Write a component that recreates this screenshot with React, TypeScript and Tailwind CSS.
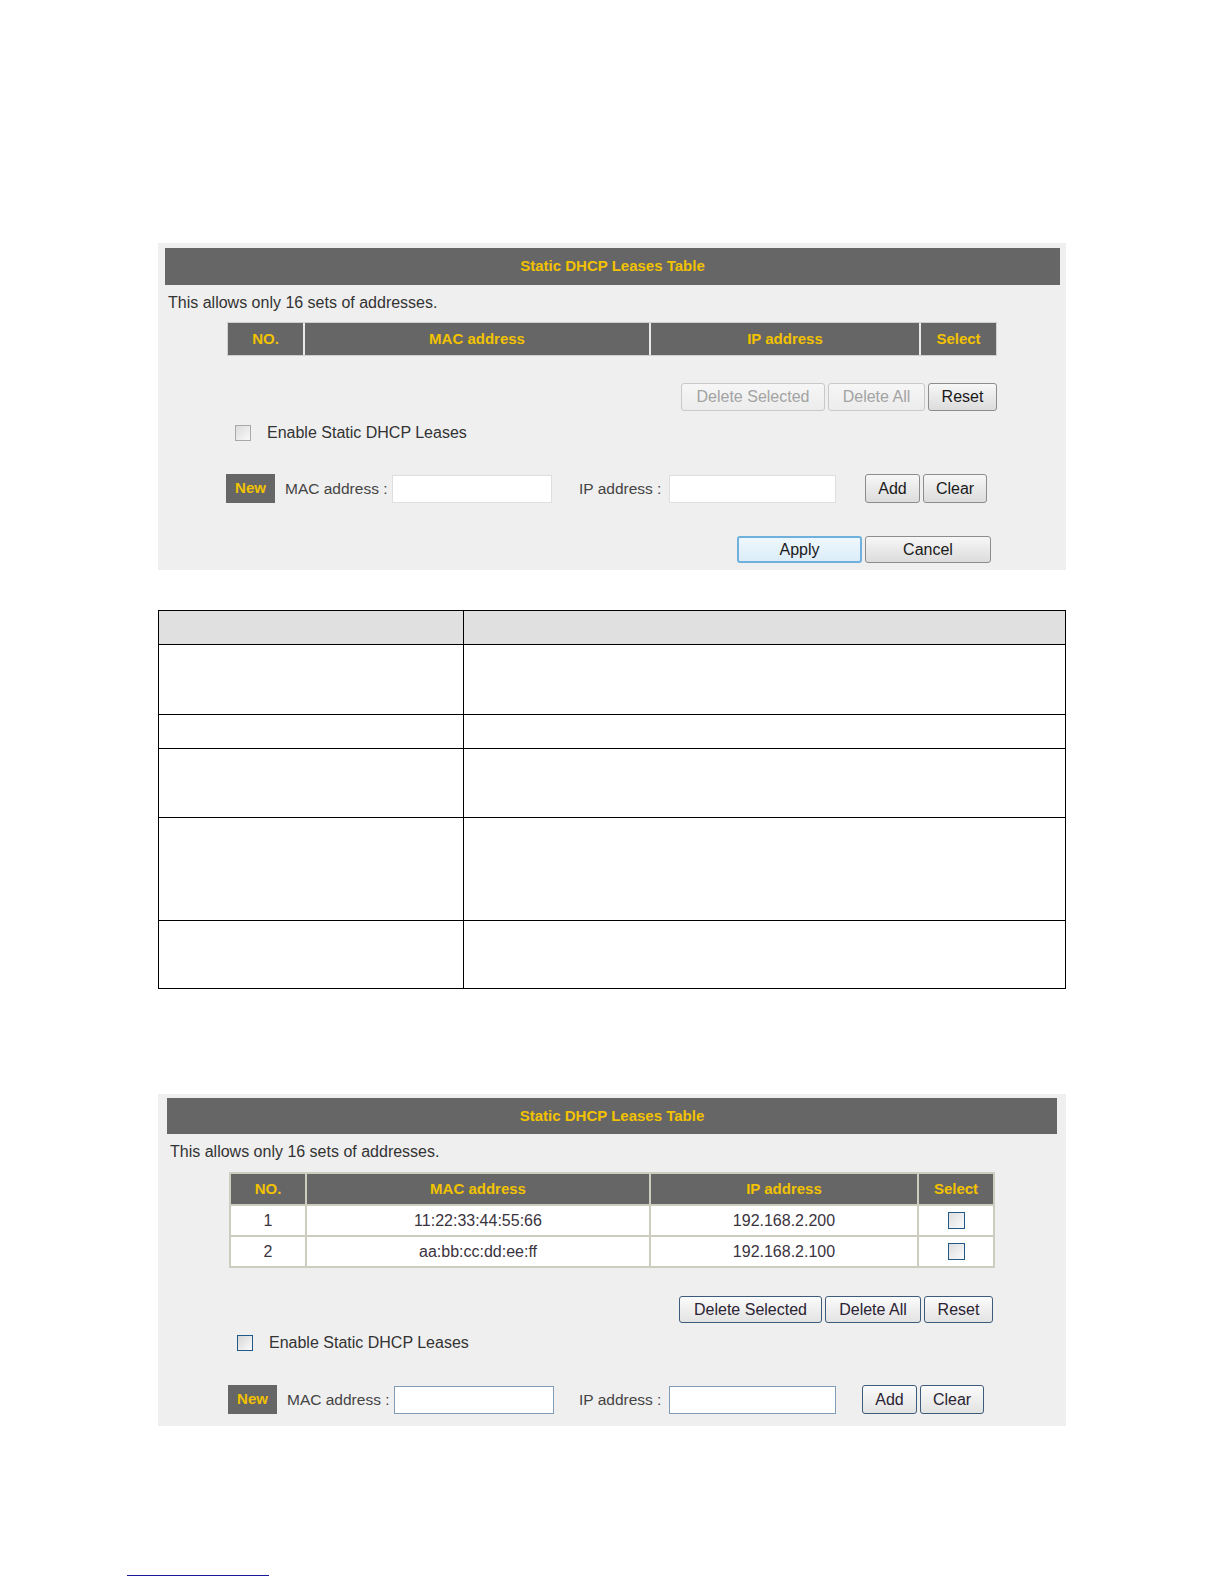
import React from 'react'

const font = { fontFamily: '"Liberation Sans", Arial, sans-serif' }

function Btn({
  children,
  w,
  kind = 'classic',
}: {
  children: React.ReactNode
  w: string
  kind?: 'classic' | 'disabled' | 'focus' | 'blue'
}) {
  const look = {
    classic: 'border border-[#8c8c8c] bg-linear-to-b from-[#f7f7f7] to-[#dcdcdc] text-[#1a1a1a]',
    disabled: 'border border-[#c9c9c9] bg-linear-to-b from-[#f6f6f6] to-[#ececec] text-[#a3a3a3]',
    focus: 'border-2 border-[#6fb0dc] bg-linear-to-b from-[#eef7fd] to-[#dcedf8] text-[#1a1a1a]',
    blue: 'border border-[#3d5c7c] bg-linear-to-b from-[#fbfbfb] to-[#e3e3e3] text-[#2a2333]',
  }[kind]
  return (
    <div className={`${w} h-full flex items-center justify-center rounded-[3px] text-[16px] leading-none ${look}`}>
      {children}
    </div>
  )
}

function Header({ className }: { className: string }) {
  return (
    <div className={`${className} bg-[#666666] flex items-center justify-center`}>
      <span className="text-[15px] font-bold text-[#f2c200]">Static DHCP Leases Table</span>
    </div>
  )
}

const headCells = ['NO.', 'MAC address', 'IP address', 'Select']

function NewRow({ blue, top }: { blue?: boolean; top: string }) {
  const input = blue ? 'border border-[#7f9db9] bg-white' : 'border border-[#dedede] bg-white'
  return (
    <div className={`${top} flex items-center h-[29px]`}>
      <div className="w-[49px] h-full bg-[#666666] flex items-center justify-center">
        <span className="text-[15px] font-bold text-[#f2c200]">New</span>
      </div>
      <span className="ml-[10px] w-[107px] text-[15.5px] text-[#444]">MAC address :</span>
      <div className={`w-[160px] h-[28px] ${input}`} />
      <span className={`${blue ? 'ml-[25px]' : 'ml-[27px]'} w-[90px] text-[15.5px] text-[#444]`}>IP address :</span>
      <div className={`w-[167px] h-[28px] ${input}`} />
      <div className={`${blue ? 'ml-[26px]' : 'ml-[29px]'} flex gap-[3px] h-[29px]`}>
        <Btn w="w-[55px]" kind={blue ? 'blue' : 'classic'}>Add</Btn>
        <Btn w="w-[64px]" kind={blue ? 'blue' : 'classic'}>Clear</Btn>
      </div>
    </div>
  )
}

function PanelOne() {
  return (
    <div className="ml-[158px] w-[908px] bg-[#efefef] pt-[5px] pb-[7px]">
      <Header className="ml-[7px] mr-[6px] h-[37px]" />
      <p className="mt-[9px] pl-[10px] text-[16px] leading-[18px] text-[#333]">This allows only 16 sets of addresses.</p>
      <div className="mt-[10px] ml-[69px] w-[770px] border border-[#cfcfcf] bg-[#e9e9e9] grid grid-cols-[75px_344px_268px_75px] gap-[2px]">
        {headCells.map((c) => (
          <div key={c} className="h-[32px] bg-[#666666] flex items-center justify-center text-[15px] font-bold text-[#f2c200]">
            {c}
          </div>
        ))}
      </div>
      <div className="mt-[27px] pr-[69px] flex justify-end gap-[3px] h-[28px]">
        <Btn w="w-[144px]" kind="disabled">Delete Selected</Btn>
        <Btn w="w-[97px]" kind="disabled">Delete All</Btn>
        <Btn w="w-[69px]">Reset</Btn>
      </div>
      <div className="mt-[13px] ml-[77px] flex items-center h-[18px]">
        <div className="w-[16px] h-[16px] border border-[#a8a8a8] bg-linear-to-br from-[#dcdcdc] to-[#f8f8f8]" />
        <span className="ml-[16px] text-[16px] text-[#333]">Enable Static DHCP Leases</span>
      </div>
      <div className="ml-[68px]">
        <NewRow top="mt-[32px]" />
      </div>
      <div className="mt-[33px] pr-[75px] flex justify-end gap-[3px] h-[27px]">
        <Btn w="w-[125px]" kind="focus">Apply</Btn>
        <Btn w="w-[126px]">Cancel</Btn>
      </div>
    </div>
  )
}

const rows = [
  ['1', '11:22:33:44:55:66', '192.168.2.200'],
  ['2', 'aa:bb:cc:dd:ee:ff', '192.168.2.100'],
]

function PanelTwo() {
  return (
    <div className="ml-[158px] w-[908px] bg-[#efefef] pt-[4px] pb-[12px]">
      <Header className="ml-[9px] mr-[9px] h-[36px]" />
      <p className="mt-[9px] pl-[12px] text-[16px] leading-[18px] text-[#333]">This allows only 16 sets of addresses.</p>
      <div className="mt-[11px] ml-[71px] w-[766px] bg-[#cdcdbf] p-[2px] grid grid-cols-[74px_342px_266px_74px] grid-rows-[30px_29px_29px] gap-[2px]">
        {headCells.map((c) => (
          <div key={c} className="bg-[#666666] flex items-center justify-center text-[15px] font-bold text-[#f2c200]">
            {c}
          </div>
        ))}
        {rows.map((r) => (
          <React.Fragment key={r[0]}>
            {r.map((v, i) => (
              <div key={i} className="bg-white flex items-center justify-center text-[16px] text-[#3a3340]">
                {v}
              </div>
            ))}
            <div className="bg-white flex items-center justify-center">
              <div className="w-[17px] h-[17px] border border-[#1f5a8a] bg-linear-to-br from-[#dedede] to-[#fbfbfb]" />
            </div>
          </React.Fragment>
        ))}
      </div>
      <div className="mt-[28px] pr-[73px] flex justify-end gap-[3px] h-[27px]">
        <Btn w="w-[143px]" kind="blue">Delete Selected</Btn>
        <Btn w="w-[96px]" kind="blue">Delete All</Btn>
        <Btn w="w-[69px]" kind="blue">Reset</Btn>
      </div>
      <div className="mt-[11px] ml-[79px] flex items-center h-[17px]">
        <div className="w-[16px] h-[16px] border border-[#1f5a8a] bg-linear-to-br from-[#d6d6d6] to-[#fbfbfb]" />
        <span className="ml-[16px] text-[16px] text-[#333]">Enable Static DHCP Leases</span>
      </div>
      <div className="ml-[70px]">
        <NewRow blue top="mt-[34px]" />
      </div>
    </div>
  )
}

const descRows = ['h-[34px] bg-[#e0e0e0]', 'h-[70px]', 'h-[34px]', 'h-[69px]', 'h-[103px]', 'h-[68px]']

function DescTable() {
  return (
    <table className="ml-[158px] mt-[40px] w-[908px] border-collapse">
      <tbody>
        {descRows.map((cls, i) => (
          <tr key={i} className={cls}>
            <td className="w-[305px] border border-black" />
            <td className="border border-black" />
          </tr>
        ))}
      </tbody>
    </table>
  )
}

export default function App() {
  return (
    <div className="w-[1224px] min-h-[1584px] bg-white pt-[243px]" style={font}>
      <PanelOne />
      <DescTable />
      <div className="mt-[105px]">
        <PanelTwo />
      </div>
      <div className="mt-[149px] ml-[127px] w-[142px] h-px bg-[#1a1a9a]" />
    </div>
  )
}
